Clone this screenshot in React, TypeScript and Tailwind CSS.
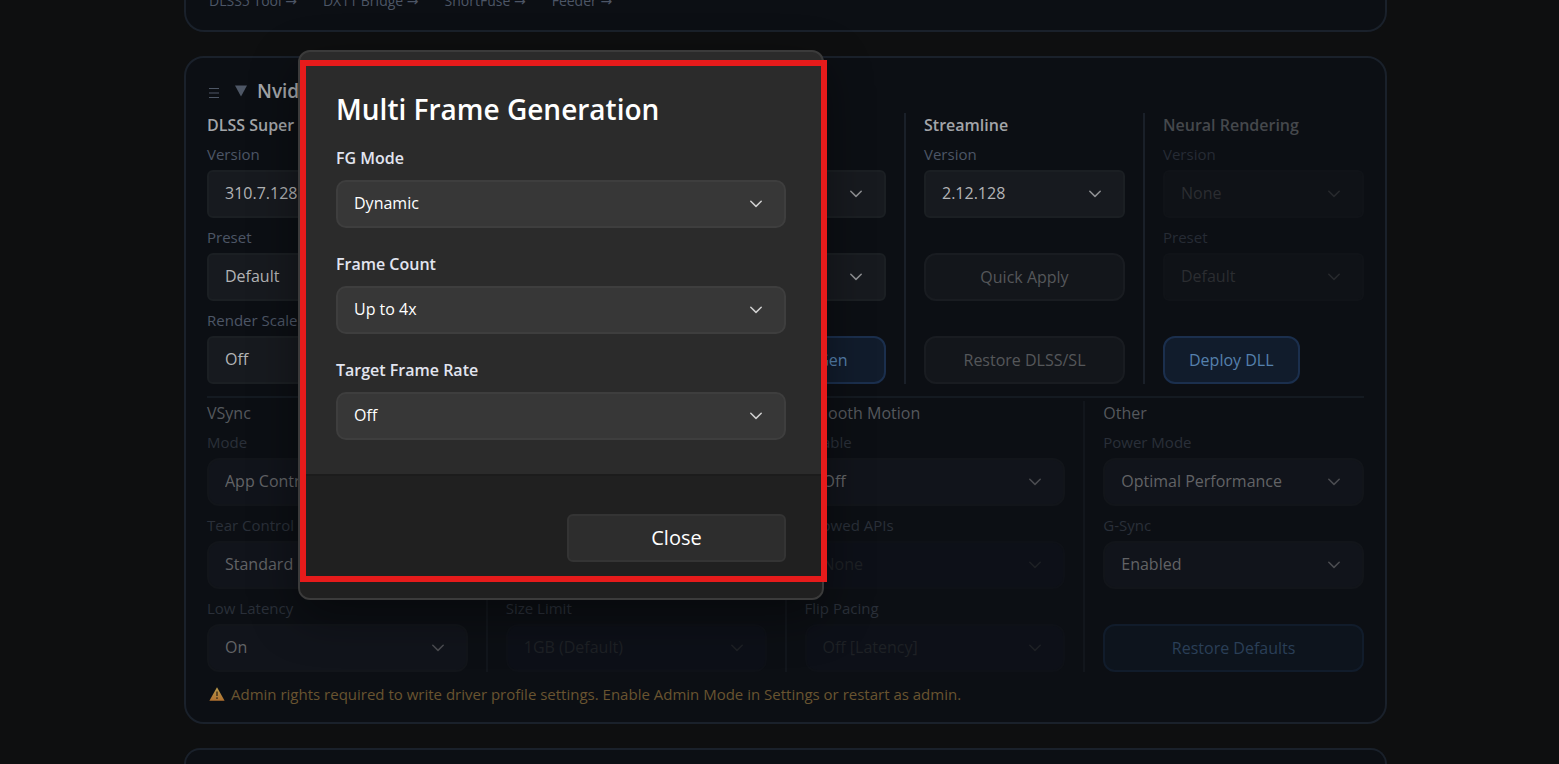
import { ReactNode, useId } from "react";

type Tone = "bright" | "dim" | "muted" | "ghost" | "dialog";

const labelTones: Record<Tone, string> = {
  bright: "text-[#4d5666]",
  dim: "text-[#262b34]",
  muted: "text-[#2a2f39]",
  ghost: "text-[#2a2f39]",
  dialog: "text-[#e2e5f0]",
};

const selectTones: Record<Tone, string> = {
  bright: "rounded-md border-[#1b1f23] bg-[#171a1f] text-[#b3b4b6]",
  dim: "rounded-md border-[#101318] bg-[#0f1217] text-[#2b2d31]",
  muted: "rounded-xl border-[#12151a] bg-[#11141b] text-[#626366]",
  ghost: "rounded-xl border-[#0e1117] bg-[#0d1018] text-[#1e2125]",
  dialog: "rounded-[10px] border-[#3e3e3e] bg-[#373737] text-white",
};

const chevronTones: Record<Tone, string> = {
  bright: "text-[#8f9093]",
  dim: "text-[#27292d]",
  muted: "text-[#4b4c50]",
  ghost: "text-[#1e2125]",
  dialog: "text-[#cfcfcf]",
};

function SelectBox({ id, value, tone }: { id: string; value: string; tone: Tone }) {
  return (
    <div className="relative">
      <select
        id={id}
        disabled={tone === "dim" || tone === "ghost"}
        className={`block h-12 w-full appearance-none border-2 pr-10 pb-[2px] pl-4 text-base opacity-100 ${selectTones[tone]}`}
      >
        <option>{value}</option>
      </select>
      <svg
        viewBox="0 0 12 8"
        className={`pointer-events-none absolute top-5 right-6 h-2 w-3 ${chevronTones[tone]}`}
        fill="none"
        stroke="currentColor"
        strokeWidth="1.5"
        strokeLinecap="round"
        strokeLinejoin="round"
      >
        <path d="M0.8 1.2 6 6.4 11.2 1.2" />
      </svg>
    </div>
  );
}

function Field({ label, value, tone }: { label: string; value: string; tone: Tone }) {
  const id = useId();

  return (
    <div>
      <label
        htmlFor={id}
        className={`mt-2 mb-[5px] block whitespace-nowrap text-[15px] leading-[22px] ${labelTones[tone]}`}
      >
        {label}
      </label>
      <SelectBox id={id} value={value} tone={tone} />
    </div>
  );
}

function DialogField({ label, value }: { label: string; value: string }) {
  const id = useId();

  return (
    <div>
      <label
        htmlFor={id}
        className={`mb-[10px] block text-base leading-6 font-semibold ${labelTones.dialog}`}
      >
        {label}
      </label>
      <SelectBox id={id} value={value} tone="dialog" />
    </div>
  );
}

function ActionButton({ children, className }: { children: ReactNode; className: string }) {
  return (
    <button
      type="button"
      className={`mt-[35px] block h-12 whitespace-nowrap rounded-xl border-2 px-6 text-base ${className}`}
    >
      {children}
    </button>
  );
}

function Column({
  title,
  titleClass,
  children,
}: {
  title: string;
  titleClass: string;
  children?: ReactNode;
}) {
  return (
    <section className="min-w-0 flex-1">
      <h3 className={`h-[22px] whitespace-nowrap text-base leading-6 ${titleClass}`}>{title}</h3>
      {children}
    </section>
  );
}

function Divider({ className }: { className: string }) {
  return <div className={`mx-[18px] w-[2px] shrink-0 ${className}`} />;
}

const tools = ["DLSS5 Tool", "DX11 Bridge", "ShortFuse", "Feeder"];

const brightTitle = "font-semibold text-[#a3a5a9]";
const dimTitle = "font-semibold text-[#45484c]";
const mutedTitle = "text-[#55585d]";

const blueButton = "border-[#1b2f4d] bg-[#111c2c] text-[#5580ad]";
const greyButton = "border-[#191c21] bg-[#13161b] text-[#55575a]";
const fadedBlueButton = "border-[#111c2b] bg-[#0d141d] text-[#2a3f57]";

const brightLine = "bg-[#1a2029]";
const mutedLine = "bg-[#12161c]";

function WarningIcon() {
  return (
    <svg viewBox="0 0 16 14" className="mr-[6px] ml-[2px] h-[14px] w-4">
      <defs>
        <linearGradient id="warning" x1="0" y1="0" x2="0" y2="1">
          <stop offset="0" stopColor="#b89a4c" />
          <stop offset="1" stopColor="#b0702f" />
        </linearGradient>
      </defs>
      <path d="M8 0.3 15.6 13.7H0.4z" fill="url(#warning)" />
      <path d="M7.2 4.5h1.6v4.6H7.2zM7.2 10.3h1.6v1.7H7.2z" fill="#4a3720" />
    </svg>
  );
}

function NvidiaCard() {
  return (
    <section className="rounded-[20px] border-2 border-[#1a212b] bg-[#0c0f14] px-[21px] pt-[19px] pb-[17px]">
      <header className="mb-2 flex h-7 items-center">
        <svg
          viewBox="0 0 10 12"
          className="mt-1 ml-[2px] h-3 w-[10px]"
          stroke="#4e5766"
          strokeWidth="1.2"
        >
          <path d="M0 1.5h10M0 6h10M0 10.5h10" />
        </svg>
        <svg viewBox="0 0 12 12" className="ml-4 h-3 w-3" fill="#4e5766">
          <path d="M0 0.5h12L6 11.5z" />
        </svg>
        <h2 className="ml-[10px] text-[19px] font-semibold text-[#a3a5a9]">Nvidia</h2>
      </header>

      <div className="flex">
        <Column title="DLSS Super Resolution" titleClass={brightTitle}>
          <Field label="Version" value="310.7.128" tone="bright" />
          <Field label="Preset" value="Default" tone="bright" />
          <Field label="Render Scale" value="Off" tone="bright" />
        </Column>
        <Divider className={brightLine} />
        <Column title="DLSS Ray Recon" titleClass={brightTitle}>
          <Field label="Version" value="310.7.128" tone="bright" />
          <Field label="Preset" value="Default" tone="bright" />
        </Column>
        <Divider className={brightLine} />
        <Column title="DLSS FG" titleClass={brightTitle}>
          <Field label="Version" value="310.7.128" tone="bright" />
          <Field label="Preset" value="Default" tone="bright" />
          <ActionButton className={`w-full ${blueButton}`}>Multi Frame Gen</ActionButton>
        </Column>
        <Divider className={brightLine} />
        <Column title="Streamline" titleClass={brightTitle}>
          <Field label="Version" value="2.12.128" tone="bright" />
          <ActionButton className={`w-full ${greyButton}`}>Quick Apply</ActionButton>
          <ActionButton className={`w-full ${greyButton}`}>Restore DLSS/SL</ActionButton>
        </Column>
        <Divider className={brightLine} />
        <Column title="Neural Rendering" titleClass={dimTitle}>
          <Field label="Version" value="None" tone="dim" />
          <Field label="Preset" value="Default" tone="dim" />
          <ActionButton className={blueButton}>Deploy DLL</ActionButton>
        </Column>
      </div>

      <hr className="mt-3 mb-[3px] border-t-2 border-[#141a21]" />

      <div className="flex">
        <Column title="VSync" titleClass={mutedTitle}>
          <Field label="Mode" value="App Controlled" tone="muted" />
          <Field label="Tear Control" value="Standard" tone="muted" />
          <Field label="Low Latency" value="On" tone="muted" />
        </Column>
        <Divider className={mutedLine} />
        <Column title="Shader Cache" titleClass={mutedTitle}>
          <Field label="Mode" value="On" tone="muted" />
          <Field label="Compile" value="Off" tone="muted" />
          <Field label="Size Limit" value="1GB (Default)" tone="ghost" />
        </Column>
        <Divider className={mutedLine} />
        <Column title="Smooth Motion" titleClass={mutedTitle}>
          <Field label="Enable" value="Off" tone="muted" />
          <Field label="Allowed APIs" value="None" tone="ghost" />
          <Field label="Flip Pacing" value="Off [Latency]" tone="ghost" />
        </Column>
        <Divider className={mutedLine} />
        <Column title="Other" titleClass={mutedTitle}>
          <Field label="Power Mode" value="Optimal Performance" tone="muted" />
          <Field label="G-Sync" value="Enabled" tone="muted" />
          <ActionButton className={`w-full ${fadedBlueButton}`}>Restore Defaults</ActionButton>
        </Column>
      </div>

      <p className="mt-[11px] flex items-center text-[15px] leading-[22px] text-[#695430]">
        <WarningIcon />
        Admin rights required to write driver profile settings. Enable Admin Mode in Settings or
        restart as admin.
      </p>
    </section>
  );
}

function FrameGenDialog() {
  return (
    <div
      role="dialog"
      aria-labelledby="dialog-title"
      className="absolute top-[50px] left-[298px] w-[526px] overflow-hidden rounded-xl border-2 border-[#3b3b3b] bg-[#2b2b2b] shadow-[0_16px_48px_rgba(0,0,0,0.4)]"
    >
      <div className="border-b-2 border-[#1c1c1c] px-9 pt-9 pb-[34px]">
        <h1 id="dialog-title" className="mb-4 text-[28px] leading-[42px] font-semibold text-white">
          Multi Frame Generation
        </h1>
        <div className="flex flex-col gap-6">
          <DialogField label="FG Mode" value="Dynamic" />
          <DialogField label="Frame Count" value="Up to 4x" />
          <DialogField label="Target Frame Rate" value="Off" />
        </div>
      </div>
      <div className="grid grid-cols-2 gap-3 bg-[#202020] px-9 pt-[38px] pb-9">
        <button
          type="button"
          className="col-start-2 h-12 rounded-md border-2 border-[#343434] bg-[#2d2d2d] text-xl text-white"
        >
          Close
        </button>
      </div>
    </div>
  );
}

export default function App() {
  return (
    <div className="relative flex h-screen flex-col gap-6 overflow-hidden bg-[#0e0f10] pr-[172px] pl-46 font-['Open_Sans',sans-serif]">
      <section className="h-8 shrink-0 rounded-b-[20px] border-2 border-t-0 border-[#1a212b] bg-[#0c0f14] px-[23px]">
        <nav className="-mt-[11px] flex gap-[26px] text-[14px] leading-6 text-[#4d5666]">
          {tools.map((tool) => (
            <a key={tool} href="#" className="whitespace-nowrap">
              {tool} <span className="font-['DejaVu_Sans']">→</span>
            </a>
          ))}
        </nav>
      </section>
      <NvidiaCard />
      <section className="min-h-4 flex-1 rounded-t-[20px] border-2 border-b-0 border-[#1a212b] bg-[#0c0f14]" />

      <FrameGenDialog />
      {/* highlight frame around the dialog */}
      <div className="pointer-events-none absolute top-[60px] left-[300px] h-[522px] w-[527px] border-[6px] border-[#e61b1b]" />
    </div>
  );
}
